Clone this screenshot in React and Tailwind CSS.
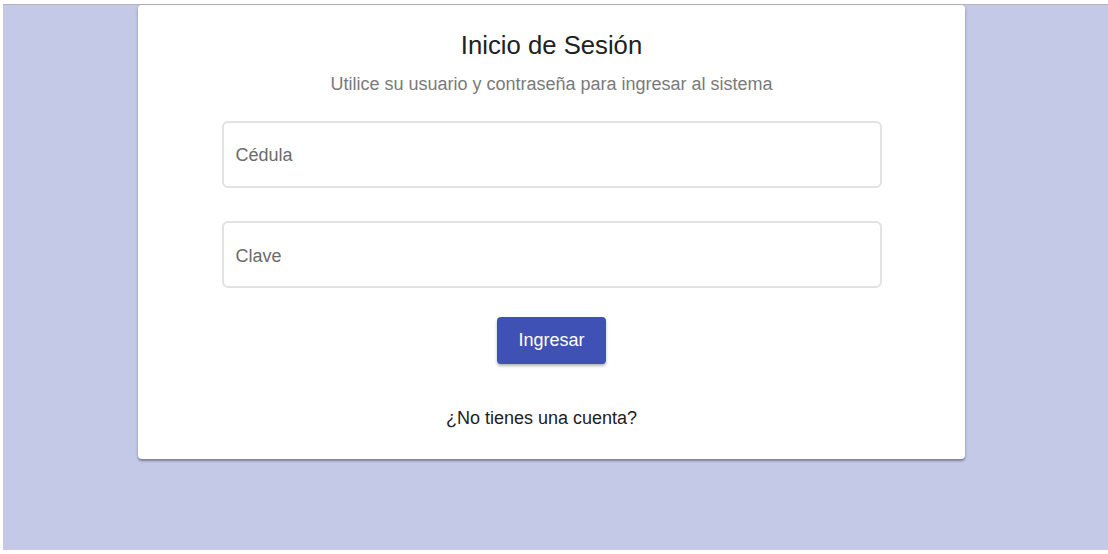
export default function App() {
  return (
    <div className="h-[554px] w-[1108px] bg-white overflow-hidden" style={{ fontFamily: '"Liberation Sans", Arial, sans-serif' }}>
      <div className="ml-[3px] mt-[4px] h-[546px] border-t border-[#b4b4b4] bg-[#c5c9e8] pl-[135px]">
        <div className="w-[827px] h-[454px] bg-white rounded-[4px] shadow-[0_2px_2px_rgba(0,0,0,0.3),0_1px_4px_rgba(0,0,0,0.12)] flex flex-col items-center">
          <h1 className="mt-[24px] text-[25.7px] leading-[32px] text-[#212121]">Inicio de Sesión</h1>
          <p className="mt-[11px] text-[18px] leading-[24px] text-[#7a7a7a]">Utilice su usuario y contraseña para ingresar al sistema</p>
          <div className="mt-[25px] w-[660px] h-[67px] border-2 border-[#e2e2e2] rounded-[6px] flex items-center px-[12px] pt-[2px] text-[18px] text-[#6b6b6b]">Cédula</div>
          <div className="mt-[33px] w-[660px] h-[67px] border-2 border-[#e2e2e2] rounded-[6px] flex items-center px-[12px] pt-[3px] text-[18px] text-[#6b6b6b]">Clave</div>
          <button className="mt-[29px] w-[109px] h-[47px] bg-[#3f51b5] text-white text-[18px] rounded-[4px] shadow-[0_2px_3px_rgba(0,0,0,0.3)]">Ingresar</button>
          <div className="mt-[43px] mr-[20px] text-[18px] leading-[22px] text-[#212121]">¿No tienes una cuenta?</div>
        </div>
      </div>
    </div>
  );
}
